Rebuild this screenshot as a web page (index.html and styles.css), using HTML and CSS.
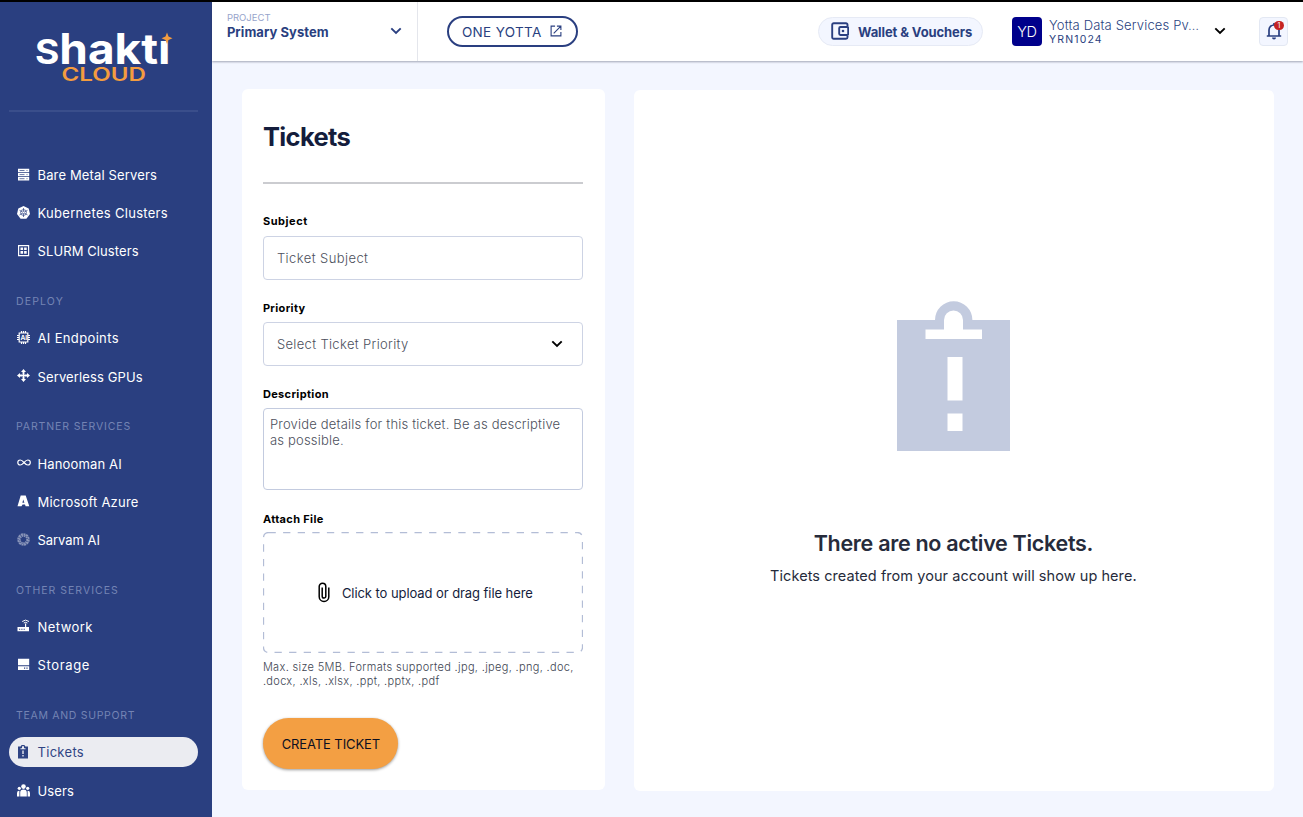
FILE: index.html
```html
<!DOCTYPE html>
<html lang="en">
<head>
<meta charset="utf-8">
<title>Tickets</title>
<link rel="stylesheet" href="styles.css">
</head>
<body>
<div class="app">
  <aside class="sidebar">
    <svg class="logo" width="140" height="54" viewBox="0 0 140 54">
      <text class="logo-main" x="1" y="35" textLength="135.500" lengthAdjust="spacingAndGlyphs"><tspan class="logo-cap">S</tspan>haktı</text>
      <text class="logo-sub" x="27.500" y="51.500" textLength="84.500" lengthAdjust="spacingAndGlyphs">CLOUD</text>
      <path fill="#f39c3f" d="M133 3.500l1.500 4 4 1.700-4 1.700-1.500 4-1.500-4-4-1.700 4-1.700z"/>
    </svg>
    <hr class="side-rule">
    <nav class="nav">
      <a class="item"><svg class="ico" viewBox="0 0 14 14"><path d="M1 .8h11.200v3.400H1zM1 4.900h11.200v3.400H1zM1 9h11.200v3.400H1z"/><path class="cut-line" d="M2.500 2.500h5M2.500 6.600h5M2.500 10.700h5M9.500 2.500h1M9.500 6.600h1M9.500 10.700h1"/></svg><span class="t18">Bare Metal Servers</span></a>
      <a class="item"><svg class="ico" viewBox="0 0 14 14"><path d="M6.500 0l5.200 2.500 1.300 5.500-3.600 4.800H3.600L0 8l1.300-5.500z"/><g class="cut-line"><circle cx="6.500" cy="6.500" r="2.900"/><path d="M6.500 2v9M2.500 4.300l8 4.600M10.500 4.300l-8 4.600"/></g><circle cx="6.500" cy="6.500" r=".8"/></svg><span class="t35">Kubernetes Clusters</span></a>
      <a class="item"><svg class="ico" viewBox="0 0 14 14"><path fill-rule="evenodd" d="M1 1h11.200v11.200H1zM2.200 2.200V11H11V2.200z"/><path d="M3.500 3.500h2.600v2.600H3.500zM7.100 3.500h2.600v2.600H7.100zM3.500 7.100h2.600v2.600H3.500zM7.100 7.100h2.600v2.600H7.100z"/></svg><span class="t13">SLURM Clusters</span></a>
      <h3 class="group t115">DEPLOY</h3>
      <a class="item"><svg class="ico" viewBox="0 0 14 14"><path class="line thick" d="M2.200 2h8.600v9H2.200zM4.500 0v2M6.500 0v2M8.500 0v2M4.500 11v2M6.500 11v2M8.500 11v2M0 4.500h2M0 6.500h2M0 8.500h2M11 4.500h2M11 6.500h2M11 8.500h2"/><text class="chip" x="3.400" y="9">AI</text></svg><span class="t40">AI Endpoints</span></a>
      <a class="item"><svg class="ico" viewBox="0 0 14 14"><path class="line heavy" d="M6.500 2v3M6.500 8v3M2 6.500h3M8 6.500h3"/><path d="M6.500 0l2.500 3H4zM6.500 13L9 10H4zM0 6.500L3 4v5zM13 6.500L10 4v5zM6.500 4.500l2 2-2 2-2-2z"/></svg><span class="t15">Serverless GPUs</span></a>
      <h3 class="group t90">PARTNER SERVICES</h3>
      <a class="item"><svg class="ico" viewBox="0 0 14 14"><path class="line thick" d="M7 6.500C5.500 4.800 4.600 4 3.300 4a2.500 2.500 0 0 0 0 5C5.900 9 8 4 10.800 4a2.500 2.500 0 0 1 0 5C9.500 9 8.500 8.200 7 6.500z"/></svg><span class="t23">Hanooman AI</span></a>
      <a class="item"><svg class="ico" viewBox="0 0 14 14"><path d="M3.700 1.500h5l3.600 10.800H8.600L8 10.500H5.600l-1.100 1.800H.5zM6.200 5.500l-.8 3.300h2z" fill-rule="evenodd"/></svg><span class="t26">Microsoft Azure</span></a>
      <a class="item"><svg class="ico faint" viewBox="0 0 14 14"><circle class="line heavy" cx="6.500" cy="6.500" r="5.300" stroke-dasharray="2.100 .6"/><circle class="line heavy" cx="6.500" cy="6.500" r="3.700" stroke-dasharray="1.500 .7"/></svg><span class="t0">Sarvam AI</span></a>
      <h3 class="group t102">OTHER SERVICES</h3>
      <a class="item"><svg class="ico" viewBox="0 0 14 14"><path fill-rule="evenodd" d="M.5 8H8V4.500h1.200V8H12v4.200H.5zM2 9.700v1h1.200v-1zM4.300 9.700v1h1.200v-1zM6.600 9.700v1h1.200v-1z"/><path class="line" d="M5.200 2.500q3.400-2.800 6.800 0M6.800 4q1.800-1.400 3.600 0"/></svg><span class="t54">Network</span></a>
      <a class="item"><svg class="ico" viewBox="0 0 14 14"><path fill-rule="evenodd" d="M1 .8h11.200v6.400H1zM1 8.200h11.200v3.900H1zM7 9.600v1.200h1.200V9.600zM9.400 9.600v1.200h1.200V9.600z"/></svg><span class="t65">Storage</span></a>
      <h3 class="group t70">TEAM AND SUPPORT</h3>
      <a class="item active"><svg class="ico" viewBox="0 0 14 14"><path fill-rule="evenodd" d="M1 1.500h2.700a2.400 2.400 0 0 1 4.600 0H11V13.500H1zM5 2v1.200H3.500v1h5v-1H7V2a1 1 0 0 0-2 0zM5.300 5.500v3.600h1.400V5.500zM5.300 10v1.500h1.400V10z"/></svg><span class="t35">Tickets</span></a>
      <a class="item last"><svg class="ico" viewBox="0 0 14 14"><circle cx="6.500" cy="2.600" r="2.300"/><circle cx="2.300" cy="4.300" r="1.600"/><circle cx="10.700" cy="4.300" r="1.600"/><path d="M3.200 12.500V8.500q0-3 3.300-3t3.300 3v4zM0 12.500V9q0-2.300 2.400-2.200v5.700zM10.600 12.500V6.800Q13 6.700 13 9v3.500z"/></svg><span class="t16">Users</span></a>
    </nav>
  </aside>

  <div class="page">
    <header class="topbar">
      <div class="project">
        <div class="project-text"><span class="project-label">PROJECT</span><b class="project-name">Primary System</b></div>
        <svg width="12" height="8" viewBox="0 0 12 8"><path class="chev navy" d="M1.300 1.300L6 6l4.700-4.700"/></svg>
      </div>
      <a class="one-yotta"><span class="drop1">ONE YOTTA</span><svg width="12" height="12" viewBox="0 0 13 13"><path class="line thick" d="M5.500 1.200H1.200v10.600h10.600V7.500M7.500 1.200h4.300v4.300M11.800 1.200L4 9"/></svg></a>
      <div class="spacer"></div>
      <a class="wallet"><svg width="18" height="18" viewBox="0 0 18 18"><path class="line heavy" d="M16.500 4.500V2.700a1.500 1.500 0 0 0-1.500-1.500H2.700a1.500 1.500 0 0 0-1.500 1.500v12.600a1.500 1.500 0 0 0 1.500 1.500H15a1.500 1.500 0 0 0 1.500-1.500v-1.800"/><rect class="line heavy" x="8.200" y="5" width="9" height="8" rx="1.200"/><circle cx="12" cy="9" r="1.300" fill="currentColor"/></svg><span class="drop1">Wallet &amp; Vouchers</span></a>
      <div class="account">
        <span class="avatar">YD</span>
        <div class="account-text"><span class="account-name">Yotta Data Services Pv…</span><span class="account-id">YRN1024</span></div>
        <svg width="12" height="8" viewBox="0 0 12 8"><path class="chev" d="M1.300 1.300L6 6l4.700-4.700"/></svg>
      </div>
      <div class="bell">
        <svg width="16" height="18" viewBox="0 0 16 18"><path class="line bell-line" d="M.8 14h14.400M3 14V8a5 5 0 0 1 10 0v6M8 3V1"/><path d="M6 15.500h4a2 2 0 0 1-4 0z" fill="currentColor"/></svg>
        <span class="badge">1</span>
      </div>
    </header>

    <main class="content">
      <section class="card form-card">
        <h1>Tickets</h1>
        <hr class="rule">
        <label class="label t66">Subject</label>
        <div class="field"><span class="t33">Ticket Subject</span></div>
        <label class="label">Priority</label>
        <div class="field"><span class="t21">Select Ticket Priority</span><svg width="12" height="8" viewBox="0 0 12 8"><path class="chev" d="M1.300 1.300L6 6l4.700-4.700"/></svg></div>
        <label class="label">Description</label>
        <div class="area">Provide details for this ticket. Be as descriptive<br>as possible.</div>
        <label class="label">Attach File</label>
        <div class="drop">
          <svg class="drop-frame" width="320" height="121"><rect x=".5" y=".5" width="319" height="120" rx="5"/></svg>
          <svg width="12" height="21" viewBox="0 0 12 21"><path class="clip" d="M10.800 5.500v9.200a4.800 4.800 0 0 1-9.600 0V4.500a3.300 3.300 0 0 1 6.600 0v9.700a1.800 1.800 0 0 1-3.600 0V5.500"/></svg>
          <span class="drop1">Click to upload or drag file here</span>
        </div>
        <p class="hint">Max. size 5MB. Formats supported .jpg, .jpeg, .png, .doc,<br>.docx, .xls, .xlsx, .ppt, .pptx, .pdf</p>
        <button class="create">CREATE TICKET</button>
      </section>

      <section class="card empty-card">
        <svg width="113" height="151" viewBox="0 0 113 151"><path fill="#c3cbdf" fill-rule="evenodd" d="M0 19h38a18.700 18.700 0 0 1 37.400 0H113v131H0zM47 19v9.500H28.500v9.500h56.500v-9.500H66V19a9.500 9.500 0 0 0-19 0zM50.500 56v43.500h15V56zM50.500 112.500v17.500h15v-17.500z"/></svg>
        <h2>There are no active Tickets.</h2>
        <p>Tickets created from your account will show up here.</p>
      </section>
    </main>
  </div>
</div>
</body>
</html>
```
FILE: styles.css
```css
* { box-sizing: border-box; }
body { margin: 0; font-family: Inter, "Open Sans", sans-serif; font-size: 13px; color: #141d3c; }
h1, h2, h3, p { margin: 0; }
svg { display: block; flex: none; }
span { white-space: nowrap; }

.app { display: flex; width: 1303px; height: 817px; border-top: 2px solid #000; background: #f3f6ff; overflow: hidden; }

/* Sidebar */
.sidebar { width: 212.400px; flex: none; background: #2a3f80; color: #fff; padding: 27px 9px 0; }
.logo { margin-left: 25px; overflow: visible; }
.logo-main { font: 700 42px Inter, sans-serif; fill: #fff; }
.logo-cap { font-size: 34px; }
.logo-sub { font: 600 18px Inter, sans-serif; fill: #f39c3f; }
.side-rule { margin: 27px 5px 0 0; border: 0; height: 2px; background: #3a4e8b; }
.nav { display: flex; flex-direction: column; margin-top: 43.500px; padding-right: 5.500px; }
.item { display: flex; align-items: center; flex: none; height: 30.200px; margin: 4px 0; padding-left: 8px; gap: 6.500px; border-radius: 15px; }
.item.last { margin-top: 4.700px; }
.item span { padding-top: 1px; }
.ico { width: 14px; height: 14px; fill: currentColor; }
.ico .cut-line { fill: none; stroke: #2a3f80; stroke-width: .7; }
.line { fill: none; stroke: currentColor; stroke-width: 1; }
.thick { stroke-width: 1.200; }
.heavy { stroke-width: 1.900; }
.bell-line { stroke-width: 1.700; }
.chip { font: 700 6.500px Inter, sans-serif; }
.faint { opacity: .45; }
.active { background: #ebecf1; color: #2f4484; }
.group { flex: none; height: 48.800px; padding: 24px 0 0 7px; font-size: 10.500px; line-height: 16px; font-weight: 400; color: #7484b4; white-space: nowrap; }

/* Letter spacing steps */
.t0 { letter-spacing: -.04px; }
.t13 { letter-spacing: .1px; }
.t15 { letter-spacing: .13px; }
.t16 { letter-spacing: .1px; }
.t18 { letter-spacing: .15px; }
.t21 { letter-spacing: .34px; }
.t23 { letter-spacing: .15px; }
.t26 { letter-spacing: .22px; }
.t33 { letter-spacing: .42px; }
.t35 { letter-spacing: .3px; }
.t40 { letter-spacing: .35px; }
.t54 { letter-spacing: .45px; }
.t65 { letter-spacing: .65px; }
.t70 { letter-spacing: .7px; }
.t90 { letter-spacing: .88px; }
.t102 { letter-spacing: 1px; }
.t115 { letter-spacing: 1.150px; }

/* Top bar */
.drop1 { padding-top: 1.500px; }
.page { flex: 1; display: flex; flex-direction: column; }
.topbar { display: flex; align-items: center; height: 58.500px; background: #fff; box-shadow: 0 1px 2px rgba(40, 45, 70, .4); padding-right: 15px; color: #2a3f80; }
.project { display: flex; align-items: center; justify-content: space-between; width: 205.500px; height: 100%; padding: 0 15px 0 14.500px; border-right: 1px solid #e4e6ec; }
.project-text { display: flex; flex-direction: column; margin-top: -10px; }
.project-label { font-size: 9.500px; line-height: 12px; color: #97a4cb; }
.project-name { font-size: 13px; line-height: 16px; letter-spacing: .05px; white-space: nowrap; }
.chev { fill: none; stroke: #000; stroke-width: 1.900; }
.chev.navy { stroke: #2a3f80; }
.one-yotta { display: flex; align-items: center; gap: 8px; width: 131px; height: 31px; margin-left: 29px; padding-left: 13px; border: 2px solid #2a3f80; border-radius: 16px; font-size: 13.500px; letter-spacing: .35px; }
.spacer { flex: 1; }
.wallet { display: flex; align-items: center; gap: 9px; width: 165px; height: 29px; padding-left: 12px; border: 1px solid #e6eaf5; border-radius: 15px; background: #f3f6ff; font-weight: 700; letter-spacing: -.1px; }
.account { display: flex; align-items: center; width: 214px; margin-left: 29px; }
.avatar { display: grid; place-items: center; width: 30px; height: 29px; border-radius: 4px; background: #00008b; color: #fff; font-size: 14.500px; font-weight: 300; letter-spacing: -.4px; }
.account-text { display: flex; flex-direction: column; width: 165px; margin-left: 7px; margin-top: 1px; }
.account-name { line-height: 14.500px; font-weight: 300; letter-spacing: .16px; }
.account-id { font-size: 10.500px; line-height: 13px; letter-spacing: 1.150px; }
.bell { position: relative; display: grid; place-items: center; width: 29px; height: 29px; margin-left: 33px; border: 1px solid #e3e8f3; border-radius: 4px; background: #f3f6ff; }
.badge { position: absolute; top: 3px; right: 3px; width: 10px; height: 9px; border-radius: 4.500px; background: #c52323; color: #fff; font-size: 7px; line-height: 9px; text-align: center; }

/* Cards */
.content { display: flex; align-items: flex-start; padding: 28.500px 0 0 29.500px; gap: 28.500px; }
.card { height: 701px; background: #fff; border-radius: 6px; }
.form-card { width: 363.500px; flex: none; padding: 32px 21px 0; }
h1 { font-size: 25.500px; line-height: 32px; letter-spacing: -.63px; }
.rule { width: 320.500px; height: 1.500px; margin: 29px 0 0; border: 0; background: #cbccd0; }
.label { display: block; height: 16px; margin-top: 29px; font-size: 11px; line-height: 16.500px; font-weight: 700; letter-spacing: .35px; color: #000; }
.label.t66 { margin-top: 30px; line-height: 15px; letter-spacing: .55px; }
.field { display: flex; align-items: center; justify-content: space-between; width: 320px; height: 43.500px; margin-top: 6.500px; padding: 0 19px 0 13px; border: 1px solid #cdd3e4; border-radius: 4px; color: #4c505c; font-weight: 300; }
.field + .label { margin-top: 20.500px; height: 15.500px; }
.field + .label + .field { margin-top: 6.500px; }
.area { width: 320px; height: 82px; margin-top: 6px; padding: 7.500px 6px; border: 1px solid #c3cbdf; border-radius: 4px; line-height: 16.300px; letter-spacing: .2px; color: #4c505c; font-weight: 300; white-space: nowrap; }
.area + .label { margin-top: 21px; line-height: 16px; }
.drop { position: relative; display: flex; align-items: center; justify-content: center; gap: 12px; width: 320px; height: 121px; margin-top: 5px; padding-left: 5px; font-weight: 400; letter-spacing: -.07px; }
.drop-frame { position: absolute; inset: 0; }
.drop-frame rect { fill: none; stroke: #b3bdd6; stroke-width: 1.300; stroke-dasharray: 7.300 7.300; }
.clip { fill: none; stroke: #000; stroke-width: 1.500; }
.hint { margin-top: 7px; font-size: 11px; line-height: 14px; letter-spacing: .33px; color: #404552; font-weight: 300; white-space: nowrap; }
.create { display: block; width: 135px; height: 51px; margin-top: 30.500px; padding: 0 0 0 1px; border: 0; border-radius: 26px; background: #f39f43; box-shadow: 0 1px 3px rgba(0, 0, 0, .4); font: 400 13px Inter, sans-serif; letter-spacing: -.1px; color: #0c1022; }
.empty-card { width: 640px; flex: none; padding: 211px 1px 0 0; margin-top: .5px; display: flex; flex-direction: column; align-items: center; color: #262b3b; }
h2 { margin-top: 77px; font-size: 21.500px; line-height: 28px; font-weight: 600; letter-spacing: -.3px; white-space: nowrap; }
.empty-card p { margin-top: 10.500px; font-size: 14.500px; line-height: 18px; letter-spacing: .06px; white-space: nowrap; }
```
